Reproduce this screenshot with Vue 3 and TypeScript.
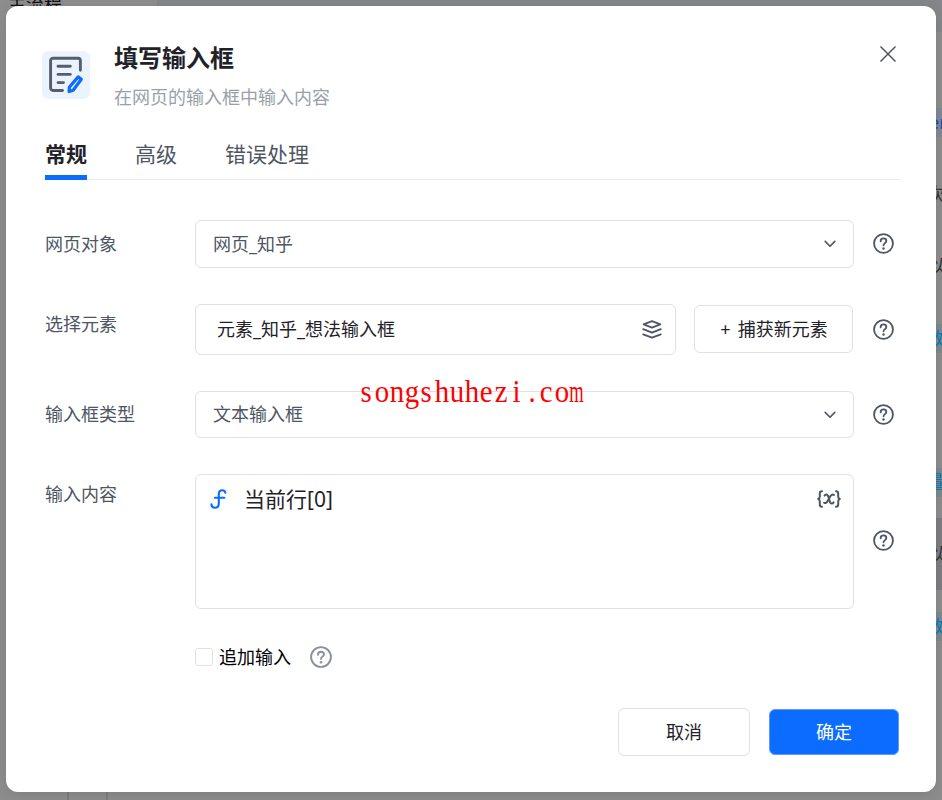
<script setup lang="ts">
import { ref } from 'vue'

interface FlowRow {
  text: string
  kind: 'keyword' | 'plain' | 'chip' | 'blank'
  active?: boolean
}

const flowRows: FlowRow[] = [
  { text: 'er', kind: 'keyword' },
  { text: '次', kind: 'plain' },
  { text: '以', kind: 'plain' },
  { text: '数', kind: 'chip' },
  { text: '', kind: 'blank' },
  { text: '量', kind: 'chip' },
  { text: '以', kind: 'plain', active: true },
  { text: '数', kind: 'chip' },
]

const tabs: string[] = ['常规', '高级', '错误处理']
const activeTab = ref<number>(0)
const append = ref<boolean>(false)
const watermark: string[] = [...'songshuhezi.com']
</script>

<template>
  <div class="screen">
    <div class="page">
      <div class="page-top">
        <div class="page-tab">主流程</div>
        <div class="page-bar"></div>
      </div>
      <div class="flow">
        <div v-for="(row, i) in flowRows" :key="i" class="flow-row" :class="{ active: row.active }">
          <span class="flow-text" :class="row.kind">{{ row.text }}</span>
        </div>
      </div>
      <div class="page-foot"><i class="rule"></i><i class="rule"></i></div>
    </div>

    <svg class="defs" width="0" height="0">
      <symbol id="help" viewBox="0 0 22 22">
        <circle cx="11" cy="11" r="9.9" fill="none" stroke="currentColor" stroke-width="1.9" />
        <path d="M8 8.7c0-1.8 1.3-3 3-3s3 1.1 3 2.7c0 2.1-3 2.3-3 4.5" fill="none" stroke="currentColor" stroke-width="1.9" stroke-linecap="round" />
        <circle cx="11" cy="16.2" r="1.3" fill="currentColor" />
      </symbol>
      <symbol id="chevron" viewBox="0 0 12 8">
        <path d="M1.2 1.4 6 6.3l4.8-4.9" fill="none" stroke="currentColor" stroke-width="1.6" stroke-linecap="round" stroke-linejoin="round" />
      </symbol>
    </svg>

    <section class="dialog">
      <header class="head">
        <div class="logo">
          <svg width="48" height="48" viewBox="0 0 48 48" fill="none" stroke-linecap="round" stroke-linejoin="round">
            <g stroke="#565d6b" stroke-width="2.9">
              <path d="M20.5 39.5H11a2.4 2.4 0 0 1-2.4-2.4V9.600A2.4 2.4 0 0 1 11 7.200h25a2.4 2.4 0 0 1 2.4 2.4v9.600" />
              <path d="M16 15.200h12.300M16 23.400h12.300M16 31.600h5.500" />
            </g>
            <path d="M36.200 25.900l3.100 2.300-8.100 11-4.100 1.300.2-4.300z" stroke="#0b6cff" stroke-width="3.2" />
          </svg>
        </div>
        <div class="titles">
          <h1>填写输入框</h1>
          <p>在网页的输入框中输入内容</p>
        </div>
        <svg class="close" width="18" height="18" viewBox="0 0 18 18">
          <path d="m1.5 1.5 15 15m0-15-15 15" stroke="#4e5663" stroke-width="1.5" fill="none" />
        </svg>
      </header>

      <nav class="tabs">
        <span v-for="(tab, i) in tabs" :key="tab" class="tab" :class="{ on: i === activeTab }" @click="activeTab = i">{{ tab }}</span>
      </nav>

      <div class="form">
        <div class="row row-page">
          <label>网页对象</label>
          <div class="box select">
            <span>网页_知乎</span>
            <svg width="12" height="8"><use href="#chevron" /></svg>
          </div>
          <svg class="help" width="21" height="21"><use href="#help" /></svg>
        </div>

        <div class="row row-element">
          <label>选择元素</label>
          <div class="pair">
            <div class="box element">
              <span>元素_知乎_想法输入框</span>
              <svg width="20" height="19" viewBox="0 0 20 19" fill="none" stroke="#4e5663" stroke-width="1.8" stroke-linecap="round" stroke-linejoin="round">
                <path d="M10 1.2 18.3 4.4 10 7.6 1.7 4.4z" />
                <path d="M1.2 9.2 10 12.6l8.8-3.4M1.2 14.4 10 17.7l8.8-3.3" />
              </svg>
            </div>
            <button class="capture"><span class="plus">+</span>捕获新元素</button>
          </div>
          <svg class="help" width="21" height="21"><use href="#help" /></svg>
        </div>

        <div class="row row-type">
          <label>输入框类型</label>
          <div class="box select">
            <span>文本输入框</span>
            <svg width="12" height="8"><use href="#chevron" /></svg>
          </div>
          <svg class="help" width="21" height="21"><use href="#help" /></svg>
        </div>

        <div class="row row-content">
          <label>输入内容</label>
          <div class="box area">
            <svg class="fx" width="17" height="20" viewBox="0 0 17 20" fill="none" stroke="#0b6cff" stroke-width="2.1" stroke-linecap="round">
              <path d="M15.4 3.7C15 2 13.9 1.2 12.3 1.2 10 1.2 8.8 2.6 8.8 5v9.5c0 2.5-1.3 4.2-3.8 4.2-2 0-3.5-1.2-3.6-3.3M5 8.7h9.4" />
            </svg>
            <span class="expr">当前行[0]</span>
            <svg class="var" width="24" height="18" viewBox="0 0 24 18" fill="none" stroke="#4e5663" stroke-width="2" stroke-linecap="round" stroke-linejoin="round">
              <path d="M5 1.2c-1.7 0-2.2.7-2.2 2.2v3C2.8 8 2.2 8.6 1.2 9c1 .4 1.6 1 1.6 2.6v3c0 1.5.5 2.2 2.2 2.2" />
              <path d="M19 1.2c1.7 0 2.2.7 2.2 2.2v3c0 1.6.6 2.2 1.6 2.6-1 .4-1.6 1-1.6 2.6v3c0 1.5-.5 2.2-2.2 2.2" />
              <path d="M7.600 5.600c.6-1.200 2.700-1.600 3.400.2l2 6.300c.6 1.900 2.700 1.700 3.600.3M17 5c-1.200-.9-2.600-.3-3.500 1l-3 5.200c-.8 1.500-2 2.500-3.400 1.500" />
            </svg>
          </div>
          <svg class="help" width="21" height="21"><use href="#help" /></svg>
        </div>

        <div class="append">
          <span class="check" :class="{ checked: append }" @click="append = !append"></span>
          <span class="append-label">追加输入</span>
          <svg class="help muted" width="22" height="22"><use href="#help" /></svg>
        </div>
      </div>

      <footer class="foot">
        <button class="cancel">取消</button>
        <button class="ok">确定</button>
      </footer>
    </section>

    <div class="watermark"><span v-for="(c, i) in watermark" :key="i" class="cell"><span class="glyph" :class="{ wide: c === 'm' }">{{ c }}</span></span></div>
  </div>
</template>

<style>
body {
  margin: 0;
}
</style>

<style scoped>
.screen {
  position: relative;
  box-sizing: border-box;
  width: 942px;
  height: 800px;
  padding: 6px;
  overflow: hidden;
  background: #8d8d8d;
  font-family: 'Noto Sans', 'Noto Sans CJK SC', sans-serif;
  font-weight: 400;
  color: #1f2329;
}
.page {
  position: absolute;
  inset: 0;
  display: flex;
  flex-direction: column;
}
.page-top {
  display: flex;
  height: 86px;
}
.page-tab {
  width: 149px;
  padding-left: 8px;
  font-size: 18px;
  line-height: 26px;
  margin-top: -9px;
  color: #111;
}
.page-bar {
  flex: 1;
  height: 32px;
  background: #85868a;
}
.flow {
  width: 16px;
  margin-left: auto;
}
.flow-row {
  display: flex;
  align-items: center;
  height: 72px;
}
.flow-row.active {
  background: #7d7d82;
}
.flow-text {
  height: 29px;
  line-height: 28px;
  font-size: 18px;
  white-space: nowrap;
  color: #33363b;
}
.flow-text.keyword {
  color: #134fa6;
  background: #828895;
  margin-left: 3px;
}
.flow-text.chip {
  color: #087bb8;
  background: #7e898c;
}
.flow-text.plain {
  margin-left: 1px;
}
.page-foot {
  display: flex;
  flex: 1;
  gap: 37px;
  padding-left: 67px;
}
.rule {
  width: 2px;
  background: #7d7d80;
}
.defs {
  position: absolute;
}
.dialog {
  position: relative;
  box-sizing: border-box;
  width: 930px;
  height: 786px;
  padding: 32px 36px 0;
  border-radius: 12px;
  background: #fff;
  box-shadow: 0 3px 14px rgba(0, 0, 0, 0.1);
}
.head {
  display: flex;
  height: 94px;
}
.logo {
  width: 48px;
  height: 48px;
  margin-top: 13px;
  border-radius: 6px;
  background: #ebf3ff;
}
.titles {
  flex: 1;
  padding-left: 24px;
}
h1 {
  margin: 0;
  font-size: 24px;
  line-height: 40px;
  font-weight: 700;
}
p {
  margin: 5px 0 0;
  font-size: 18px;
  line-height: 28px;
  color: #9a9fa8;
}
.close {
  margin: 7px 3px 0 0;
}
.tabs {
  display: flex;
  gap: 48px;
  height: 47px;
  padding-left: 3px;
  border-bottom: 1px solid #e9eaec;
}
.tab {
  box-sizing: border-box;
  height: 48px;
  font-size: 21px;
  line-height: 44px;
  color: #4e5663;
}
.tab.on {
  font-weight: 700;
  color: #1f2329;
  border-bottom: 5px solid #0b6cff;
}
.form {
  display: flex;
  flex-direction: column;
  margin-top: 40px;
}
.row {
  display: grid;
  grid-template-columns: 150px 659px 40px;
  padding-left: 3px;
  align-items: center;
}
.row label {
  align-self: start;
  font-size: 18px;
  line-height: 28px;
  color: #4e5663;
}
.help {
  display: block;
  margin-left: 19px;
  color: #4e5663;
}
.box {
  box-sizing: border-box;
  display: flex;
  align-items: center;
  border: 1px solid #dfe1e7;
  border-radius: 6px;
  font-size: 18px;
}
.select,
.element {
  justify-content: space-between;
}
.select {
  padding: 0 17px;
  color: #4e5663;
}
.select span,
.element span {
  line-height: 28px;
}
.element span,
.row-type .select span {
  padding-bottom: 1px;
}
.row-page .box {
  height: 48px;
}
.row-page label {
  margin-top: 10px;
}
.row-page .help {
  margin-bottom: 1px;
}
.row-element {
  margin-top: 36px;
}
.row-element label {
  margin-top: 6px;
}
.row-element .help {
  margin-bottom: 1px;
}
.pair {
  display: flex;
  align-items: flex-start;
  gap: 18px;
}
.element {
  width: 481px;
  height: 51px;
  padding: 0 13px 0 21px;
}
button {
  box-sizing: border-box;
  padding: 0;
  font: inherit;
  font-size: 18px;
  line-height: 28px;
  color: #1f2329;
  background: #fff;
  border: 1px solid #dfe1e7;
  border-radius: 6px;
}
.capture {
  width: 159px;
  height: 48px;
  margin-top: 1px;
  padding-left: 1px;
}
.plus {
  margin-right: 7px;
}
.row-type {
  margin-top: 36px;
}
.row-type .box {
  height: 47px;
}
.row-type label {
  margin-top: 9px;
}
.row-type .help {
  margin-bottom: 1px;
}
.row-content {
  margin-top: 36px;
}
.row-content label {
  margin-top: 6px;
}
.row-content .help {
  margin-bottom: 3px;
}
.area {
  height: 135px;
  align-items: flex-start;
  padding: 14px 12px 0 14px;
}
.expr {
  margin-left: 17px;
  margin-top: -6px;
  font-size: 21px;
  line-height: 32px;
}
.var {
  margin-left: auto;
  margin-top: 1px;
}
.append {
  display: flex;
  align-items: center;
  height: 30px;
  margin-top: 33px;
  padding-left: 153px;
  font-size: 18px;
}
.check {
  box-sizing: border-box;
  width: 18px;
  height: 18px;
  border: 1px solid #dfe1e7;
  border-radius: 3px;
}
.check.checked {
  background: #0b6cff;
}
.append-label {
  margin-left: 6px;
  line-height: 28px;
  color: #000;
}
.muted {
  color: #8b909b;
}
.foot {
  display: flex;
  justify-content: flex-end;
  align-items: center;
  gap: 19px;
  margin-top: 36px;
  padding-right: 1px;
}
.cancel {
  width: 132px;
  height: 48px;
}
.ok {
  width: 130px;
  height: 46px;
  color: #fff;
  background: #0b6cff;
  border-color: #5a9bff;
}
.watermark {
  position: absolute;
  left: 359px;
  top: 372px;
  display: flex;
  font-family: 'Liberation Serif', serif;
  font-weight: 400;
  font-size: 32px;
  line-height: 38px;
  color: #f00;
}
.cell {
  display: flex;
  justify-content: center;
  width: 15px;
}
.glyph {
  flex: none;
  transform: scaleX(0.9);
}
.glyph.wide {
  transform: scaleX(0.58);
}
</style>
